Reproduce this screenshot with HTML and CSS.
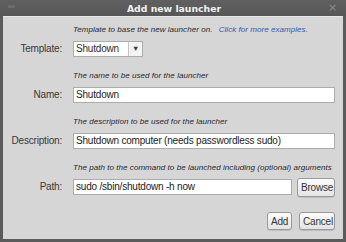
FILE: index.html
```html
<!DOCTYPE html>
<html lang="en">
<head>
  <meta charset="UTF-8">
  <title>Add new launcher</title>
  <link rel="stylesheet" href="styles.css">
</head>
<body>
  <div class="window">
    <div class="titlebar">
      <span class="win-icon"></span>
      <span class="title">Add new launcher</span>
      <span class="close">&times;</span>
    </div>
    <div class="dialog">
      <div class="block">
        <div class="hint">Template to base the new launcher on. <a class="link" href="#">Click for more examples.</a></div>
        <div class="row">
          <label class="label">Template:</label>
          <div class="combo">
            <span class="combo-text">Shutdown</span>
            <span class="combo-arrow">&#9660;</span>
          </div>
        </div>
      </div>

      <div class="block">
        <div class="hint">The name to be used for the launcher</div>
        <div class="row">
          <label class="label">Name:</label>
          <div class="input">Shutdown</div>
        </div>
      </div>

      <div class="block">
        <div class="hint">The description to be used for the launcher</div>
        <div class="row">
          <label class="label">Description:</label>
          <div class="input">Shutdown computer (needs passwordless sudo)</div>
        </div>
      </div>

      <div class="block">
        <div class="hint">The path to the command to be launched including (optional) arguments</div>
        <div class="row">
          <label class="label">Path:</label>
          <div class="input">sudo /sbin/shutdown -h now</div>
          <button class="btn btn-browse">Browse</button>
        </div>
      </div>

      <div class="actions">
        <button class="btn btn-add">Add</button>
        <button class="btn btn-cancel">Cancel</button>
      </div>
    </div>
  </div>
</body>
</html>
```

FILE: styles.css
```css
* {
  box-sizing: border-box;
  margin: 0;
  padding: 0;
}

body {
  width: 346px;
  height: 242px;
  overflow: hidden;
  font-family: "Liberation Sans", Arial, sans-serif;
  font-size: 10px;
  letter-spacing: -0.2px;
  color: #2e2e2e;
  background: #555;
}

.window {
  height: 242px;
  display: flex;
  flex-direction: column;
  background: #5b5b5b;
  padding: 0 3px 3px 3px;
}

.titlebar {
  height: 16px;
  flex: none;
  display: flex;
  align-items: center;
  justify-content: center;
  position: relative;
  margin: 0 -3px;
  background: linear-gradient(#606060, #565656);
}

.title {
  font-family: "DejaVu Sans", Verdana, sans-serif;
  font-weight: bold;
  font-size: 9.3px;
  letter-spacing: 0;
  color: #f2f2f2;
  margin-left: 2px;
}

.win-icon {
  position: absolute;
  left: 8px;
  top: 5px;
  width: 7px;
  height: 3px;
  background: #6c6c6c;
}

.close {
  position: absolute;
  right: 9px;
  top: 1px;
  font-family: "DejaVu Sans", sans-serif;
  font-size: 11px;
  color: #8a8a8a;
}

.dialog {
  flex: 1;
  background: #d6d6d6;
  border-top: 1px solid #e6e6e6;
  padding: 7px 8px 0 7px;
}

.block {
  height: 46px;
}

.hint {
  height: 12px;
  line-height: 12px;
  margin: 0 0 5px 63px;
  font-size: 8px;
  font-style: italic;
  letter-spacing: 0.05px;
  color: #26262e;
  white-space: nowrap;
}

.link {
  color: #3558b0;
  text-decoration: none;
  margin-left: 4px;
}

.row {
  height: 16px;
  display: flex;
  align-items: flex-start;
  gap: 11px;
}

.label {
  width: 52px;
  flex: none;
  line-height: 16px;
  text-align: right;
  color: #383838;
}

.input {
  flex: 1;
  height: 16px;
  line-height: 14px;
  padding: 0 2px;
  background: #fff;
  border: 1px solid #acacac;
  color: #222;
  white-space: nowrap;
}

.combo {
  width: 70px;
  height: 16px;
  display: flex;
  line-height: 14px;
  background: #fff;
  border: 1px solid #acacac;
}

.combo-text {
  flex: 1;
  padding-left: 2px;
  border-right: 1px solid #c4c4c4;
}

.combo-arrow {
  width: 13px;
  text-align: center;
  font-size: 7.5px;
  color: #3c3c3c;
  background: #f4f4f4;
}

.btn {
  height: 18px;
  padding: 0 3px;
  font-family: "Liberation Sans", Arial, sans-serif;
  font-size: 10px;
  letter-spacing: -0.2px;
  color: #333;
  border: 1px solid #9a9a9a;
  border-radius: 3px;
  background: linear-gradient(#fcfcfc, #e4e4e4);
  box-shadow: 0 1px 0 #bdbdbd;
}

.btn-browse {
  width: 38px;
  height: 19px;
  margin: -1px 0 0 -6px;
}

.btn-add {
  width: 25px;
}

.btn-cancel {
  width: 36px;
}

.actions {
  display: flex;
  justify-content: flex-end;
  gap: 7px;
  margin-top: 4px;
}
```
